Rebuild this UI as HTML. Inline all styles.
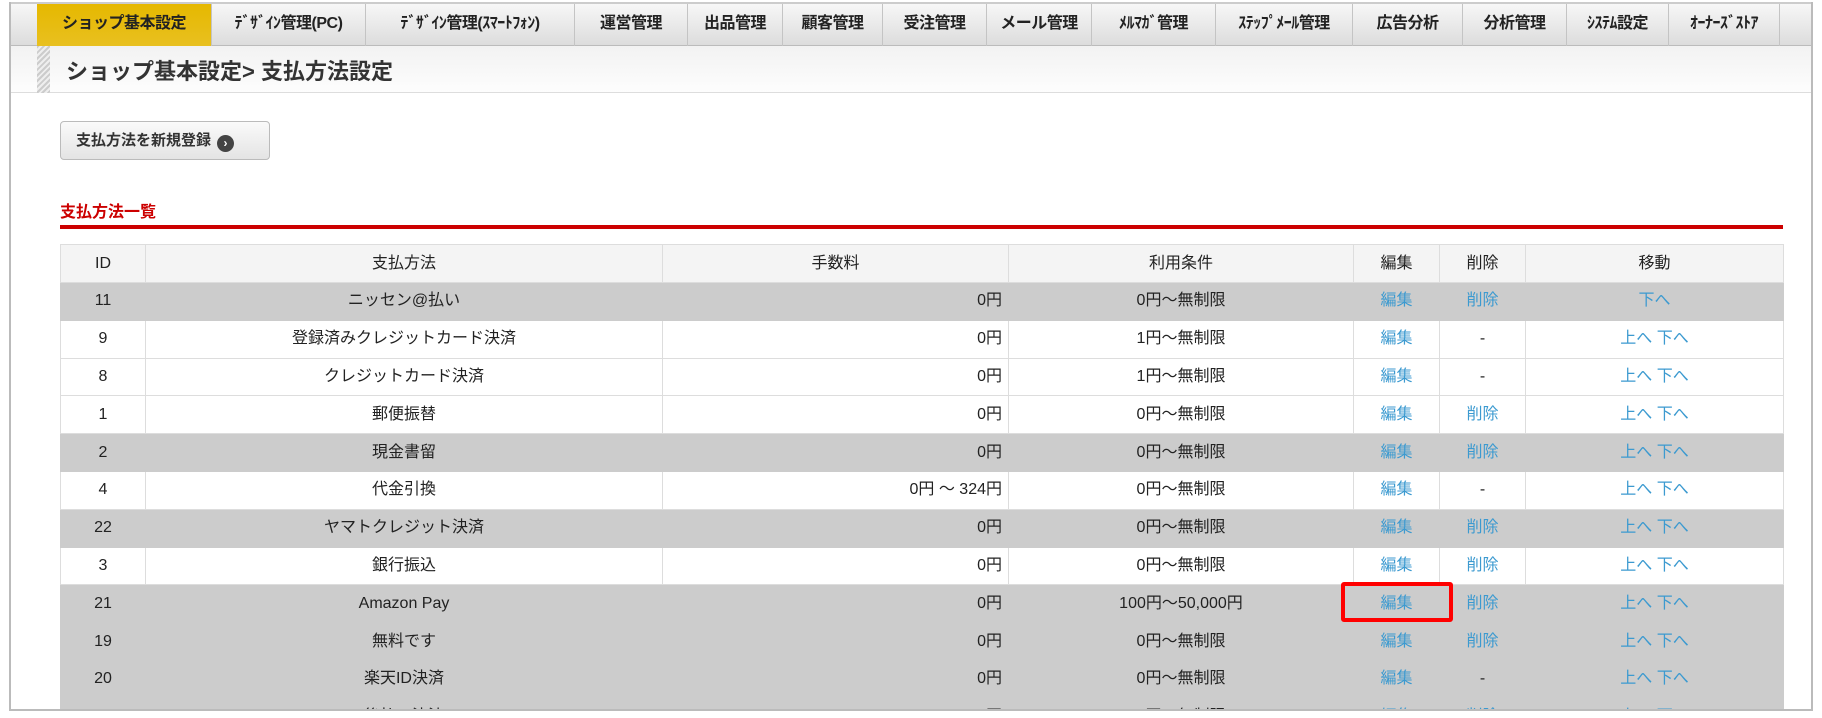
<!DOCTYPE html>
<html><head><meta charset="utf-8">
<style>
*{box-sizing:border-box;margin:0;padding:0}
body{width:1822px;height:718px;background:#fff;font-family:"Liberation Sans","Noto Sans CJK JP",sans-serif;color:#333;position:relative;overflow:hidden}
#frame{position:absolute;left:9px;top:2px;width:1804px;height:709px;border:2px solid #bbb;border-top:none;overflow:hidden;background:#fff}
#nav{position:absolute;left:0;top:0;width:100%;height:44px;background:linear-gradient(#f7f7f7,#dcdcdc);border-top:2px solid #ccc;border-bottom:1px solid #bbb}
.tab{position:absolute;top:0;height:42px;line-height:40px;text-align:center;font-size:16px;font-weight:bold;color:#222;border-right:1px solid #c4c4c4;white-space:nowrap;letter-spacing:-0.5px}
.tab.on{background:linear-gradient(#e6b800,#e8c020);}
#hdr{position:absolute;left:0;top:44px;width:100%;height:47px;background:linear-gradient(#f2f2f2,#fdfdfd);border-bottom:1px solid #ddd}
#hatch{position:absolute;left:26px;top:44px;width:13px;height:47px;background:repeating-linear-gradient(135deg,#ccc 0 2px,#eee 2px 4px)}
#title{position:absolute;left:55px;top:52px;font-size:22px;font-weight:bold;color:#333}
#btn{position:absolute;left:49px;top:119px;width:210px;height:39px;border:1px solid #bbb;border-radius:4px;background:linear-gradient(#fafafa,#e4e4e4);font-size:15px;font-weight:bold;line-height:37px;padding-left:15px;color:#333}
#btn span{display:inline-block;width:17px;height:17px;border-radius:50%;background:#444;color:#fff;font-size:12px;line-height:17px;text-align:center;vertical-align:-2px;margin-left:6px}
#sec{position:absolute;left:49px;top:196px;font-size:16px;font-weight:bold;color:#cc0000}
#red{position:absolute;left:49px;top:223px;width:1723px;height:4px;background:#cc0000}
table{position:absolute;left:49px;top:242px;width:1723px;border-collapse:collapse;font-size:16px;table-layout:fixed}
td,th{border:1px solid #ddd;height:37.8px;line-height:20px;vertical-align:middle;text-align:center;font-weight:normal;color:#222;white-space:nowrap;padding:0 6px}
th{background:#f4f4f4;height:38px}
tr.g td{background:#cccccc;border-color:#ccc}
td.r{text-align:right}
a{color:#3c9ad0;text-decoration:none}
#box{position:absolute;left:1341px;top:582px;width:112px;height:40px;border:4px solid #f00;border-radius:3px}
</style></head><body>
<div id="frame">
<div id="nav">
<div class="tab on" style="left:26px;width:175px">ショップ基本設定</div>
<div class="tab" style="left:201px;width:154px">ﾃﾞｻﾞｲﾝ管理(PC)</div>
<div class="tab" style="left:355px;width:209px">ﾃﾞｻﾞｲﾝ管理(ｽﾏｰﾄﾌｫﾝ)</div>
<div class="tab" style="left:564px;width:113px">運営管理</div>
<div class="tab" style="left:677px;width:95px">出品管理</div>
<div class="tab" style="left:772px;width:100px">顧客管理</div>
<div class="tab" style="left:872px;width:104px">受注管理</div>
<div class="tab" style="left:976px;width:105px">メール管理</div>
<div class="tab" style="left:1081px;width:124px">ﾒﾙﾏｶﾞ管理</div>
<div class="tab" style="left:1205px;width:137px">ｽﾃｯﾌﾟﾒｰﾙ管理</div>
<div class="tab" style="left:1342px;width:110px">広告分析</div>
<div class="tab" style="left:1452px;width:104px">分析管理</div>
<div class="tab" style="left:1556px;width:102px">ｼｽﾃﾑ設定</div>
<div class="tab" style="left:1658px;width:111px">ｵｰﾅｰｽﾞｽﾄｱ</div>
</div>
<div id="hdr"></div><div id="hatch"></div>
<div id="title">ショップ基本設定&gt; 支払方法設定</div>
<div id="btn">支払方法を新規登録<span>›</span></div>
<div id="sec">支払方法一覧</div>
<div id="red"></div>
<table>
<colgroup><col style="width:85px"><col style="width:517px"><col style="width:346px"><col style="width:345px"><col style="width:86px"><col style="width:86px"><col style="width:258px"></colgroup>
<tr><th>ID</th><th>支払方法</th><th>手数料</th><th>利用条件</th><th>編集</th><th>削除</th><th>移動</th></tr>
<tr class="g"><td>11</td><td>ニッセン@払い</td><td class="r">0円</td><td>0円～無制限</td><td><a>編集</a></td><td><a>削除</a></td><td><a>下へ</a></td></tr>
<tr><td>9</td><td>登録済みクレジットカード決済</td><td class="r">0円</td><td>1円～無制限</td><td><a>編集</a></td><td>-</td><td><a>上へ 下へ</a></td></tr>
<tr><td>8</td><td>クレジットカード決済</td><td class="r">0円</td><td>1円～無制限</td><td><a>編集</a></td><td>-</td><td><a>上へ 下へ</a></td></tr>
<tr><td>1</td><td>郵便振替</td><td class="r">0円</td><td>0円～無制限</td><td><a>編集</a></td><td><a>削除</a></td><td><a>上へ 下へ</a></td></tr>
<tr class="g"><td>2</td><td>現金書留</td><td class="r">0円</td><td>0円～無制限</td><td><a>編集</a></td><td><a>削除</a></td><td><a>上へ 下へ</a></td></tr>
<tr><td>4</td><td>代金引換</td><td class="r">0円 ～ 324円</td><td>0円～無制限</td><td><a>編集</a></td><td>-</td><td><a>上へ 下へ</a></td></tr>
<tr class="g"><td>22</td><td>ヤマトクレジット決済</td><td class="r">0円</td><td>0円～無制限</td><td><a>編集</a></td><td><a>削除</a></td><td><a>上へ 下へ</a></td></tr>
<tr><td>3</td><td>銀行振込</td><td class="r">0円</td><td>0円～無制限</td><td><a>編集</a></td><td><a>削除</a></td><td><a>上へ 下へ</a></td></tr>
<tr class="g"><td>21</td><td>Amazon Pay</td><td class="r">0円</td><td>100円～50,000円</td><td><a>編集</a></td><td><a>削除</a></td><td><a>上へ 下へ</a></td></tr>
<tr class="g"><td>19</td><td>無料です</td><td class="r">0円</td><td>0円～無制限</td><td><a>編集</a></td><td><a>削除</a></td><td><a>上へ 下へ</a></td></tr>
<tr class="g"><td>20</td><td>楽天ID決済</td><td class="r">0円</td><td>0円～無制限</td><td><a>編集</a></td><td>-</td><td><a>上へ 下へ</a></td></tr>
<tr class="g"><td>23</td><td>後払い決済</td><td class="r">0円</td><td>0円～無制限</td><td><a>編集</a></td><td><a>削除</a></td><td><a>上へ 下へ</a></td></tr>
</table>
</div>
<div id="box"></div>
</body></html>
